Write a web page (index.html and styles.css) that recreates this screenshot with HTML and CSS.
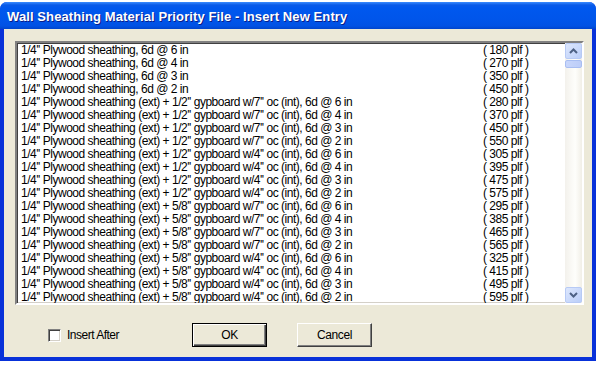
FILE: index.html
```html
<!DOCTYPE html>
<html>
<head>
<meta charset="utf-8">
<link rel="stylesheet" href="styles.css">
</head>
<body>
<div class="window">
  <div class="titlebar"><span class="title">Wall Sheathing Material Priority File - Insert New Entry</span></div>
  <div class="client">
    <div class="listbox">
      <div class="rows">
        <div class="row"><span>1/4'' Plywood sheathing, 6d @ 6 in</span><span>( 180 plf )</span></div>
        <div class="row"><span>1/4'' Plywood sheathing, 6d @ 4 in</span><span>( 270 plf )</span></div>
        <div class="row"><span>1/4'' Plywood sheathing, 6d @ 3 in</span><span>( 350 plf )</span></div>
        <div class="row"><span>1/4'' Plywood sheathing, 6d @ 2 in</span><span>( 450 plf )</span></div>
        <div class="row"><span>1/4'' Plywood sheathing (ext) + 1/2'' gypboard w/7'' oc (int), 6d @ 6 in</span><span>( 280 plf )</span></div>
        <div class="row"><span>1/4'' Plywood sheathing (ext) + 1/2'' gypboard w/7'' oc (int), 6d @ 4 in</span><span>( 370 plf )</span></div>
        <div class="row"><span>1/4'' Plywood sheathing (ext) + 1/2'' gypboard w/7'' oc (int), 6d @ 3 in</span><span>( 450 plf )</span></div>
        <div class="row"><span>1/4'' Plywood sheathing (ext) + 1/2'' gypboard w/7'' oc (int), 6d @ 2 in</span><span>( 550 plf )</span></div>
        <div class="row"><span>1/4'' Plywood sheathing (ext) + 1/2'' gypboard w/4'' oc (int), 6d @ 6 in</span><span>( 305 plf )</span></div>
        <div class="row"><span>1/4'' Plywood sheathing (ext) + 1/2'' gypboard w/4'' oc (int), 6d @ 4 in</span><span>( 395 plf )</span></div>
        <div class="row"><span>1/4'' Plywood sheathing (ext) + 1/2'' gypboard w/4'' oc (int), 6d @ 3 in</span><span>( 475 plf )</span></div>
        <div class="row"><span>1/4'' Plywood sheathing (ext) + 1/2'' gypboard w/4'' oc (int), 6d @ 2 in</span><span>( 575 plf )</span></div>
        <div class="row"><span>1/4'' Plywood sheathing (ext) + 5/8'' gypboard w/7'' oc (int), 6d @ 6 in</span><span>( 295 plf )</span></div>
        <div class="row"><span>1/4'' Plywood sheathing (ext) + 5/8'' gypboard w/7'' oc (int), 6d @ 4 in</span><span>( 385 plf )</span></div>
        <div class="row"><span>1/4'' Plywood sheathing (ext) + 5/8'' gypboard w/7'' oc (int), 6d @ 3 in</span><span>( 465 plf )</span></div>
        <div class="row"><span>1/4'' Plywood sheathing (ext) + 5/8'' gypboard w/7'' oc (int), 6d @ 2 in</span><span>( 565 plf )</span></div>
        <div class="row"><span>1/4'' Plywood sheathing (ext) + 5/8'' gypboard w/4'' oc (int), 6d @ 6 in</span><span>( 325 plf )</span></div>
        <div class="row"><span>1/4'' Plywood sheathing (ext) + 5/8'' gypboard w/4'' oc (int), 6d @ 4 in</span><span>( 415 plf )</span></div>
        <div class="row"><span>1/4'' Plywood sheathing (ext) + 5/8'' gypboard w/4'' oc (int), 6d @ 3 in</span><span>( 495 plf )</span></div>
        <div class="row"><span>1/4'' Plywood sheathing (ext) + 5/8'' gypboard w/4'' oc (int), 6d @ 2 in</span><span>( 595 plf )</span></div>
      </div>
      <div class="scrollbar">
        <div class="sbtn"><svg width="9" height="6" viewBox="0 0 9 6"><path d="M1 5 L4.5 1.5 L8 5" fill="none" stroke="#4D6185" stroke-width="2"/></svg></div>
        <div class="thumb"></div>
        <div class="track"></div>
        <div class="sbtn"><svg width="9" height="6" viewBox="0 0 9 6"><path d="M1 1 L4.5 4.5 L8 1" fill="none" stroke="#4D6185" stroke-width="2"/></svg></div>
      </div>
    </div>
    <div class="footer">
      <div class="opt"><span class="check"></span><span class="optlabel">Insert After</span></div>
      <div class="btn default">OK</div>
      <div class="btn cancel">Cancel</div>
    </div>
  </div>
</div>
</body>
</html>
```
FILE: styles.css
```css
html, body {
  margin: 0;
  padding: 0;
  background: #ffffff;
}
body {
  padding-top: 2px;
  font-family: "Liberation Sans", Arial, sans-serif;
}
.window {
  width: 596px;
  height: 359px;
  box-sizing: border-box;
  display: flex;
  flex-direction: column;
  background: #0831D9;
  border-radius: 7px 7px 0 0;
  overflow: hidden;
}
.titlebar {
  height: 27px;
  flex: none;
  background: linear-gradient(#3A8CFF 0px, #0A5AE8 3px, #0058EE 6px, #0055EA 18px, #0152E4 24px, #0044CC 27px);
  display: flex;
  align-items: center;
  padding-left: 7px;
}
.title {
  color: #ffffff;
  font-family: "Liberation Sans", Arial, sans-serif;
  font-weight: bold;
  font-size: 13px;
  letter-spacing: 0.1px;
  text-shadow: 1px 1px 0 #0A1E8A;
  padding-top: 2px;
}
.client {
  flex: 1;
  margin: 0 4px 4px 4px;
  background: #ECE9D8;
  padding: 12px 0 0 11px;
  box-sizing: border-box;
}
.listbox {
  width: 569px;
  height: 264px;
  box-sizing: border-box;
  border-style: solid;
  border-width: 2px;
  border-color: #808080 #FFFFFF #FFFFFF #808080;
  box-shadow: inset 1px 1px 0 #404040, inset -1px -1px 0 #D4D0C8;
  background: #ffffff;
  display: flex;
  overflow: hidden;
}
.rows {
  flex: 1;
  padding-left: 4px;
  overflow: hidden;
}
.row {
  height: 13px;
  line-height: 14px;
  font-size: 12px;
  color: #000;
  display: grid;
  grid-template-columns: 462px auto;
  white-space: nowrap;
  letter-spacing: -0.48px;
}
.scrollbar {
  width: 17px;
  flex: none;
  display: flex;
  flex-direction: column;
  background: linear-gradient(90deg, #F3F1EC, #FEFEFB 60%, #F1EFE7);
}
.sbtn {
  height: 16px;
  box-sizing: border-box;
  border: 1px solid #B7CAF5;
  border-radius: 2px;
  background: linear-gradient(135deg, #DDE7FD, #BACEF9);
  display: flex;
  align-items: center;
  justify-content: center;
  flex: none;
}
.thumb {
  height: 8px;
  margin-top: 1px;
  box-sizing: border-box;
  border: 1px solid #A8BEF2;
  border-radius: 2px;
  background: linear-gradient(90deg, #C8D6FB, #BCCDF8);
  flex: none;
}
.track {
  flex: 1;
}
.footer {
  display: flex;
  align-items: center;
  padding: 18px 0 0 33px;
}
.opt {
  width: 144px;
  display: flex;
  align-items: center;
}
.check {
  width: 13px;
  height: 13px;
  box-sizing: border-box;
  background: #fff;
  border-style: solid;
  border-width: 1px;
  border-color: #808080 #fff #fff #808080;
  box-shadow: inset 1px 1px 0 #404040, inset -1px -1px 0 #D4D0C8;
}
.optlabel {
  margin-left: 6px;
  font-size: 12px;
  letter-spacing: -0.5px;
}
.btn {
  width: 75px;
  height: 24px;
  box-sizing: border-box;
  display: flex;
  align-items: center;
  justify-content: center;
  font-size: 12px;
  letter-spacing: -0.4px;
  color: #000;
  background: #ECE9D8;
}
.default {
  border: 1px solid #000;
  box-shadow: inset 1px 1px 0 #fff, inset -1px -1px 0 #404040, inset -2px -2px 0 #808080;
}
.cancel {
  margin-left: 30px;
  border-style: solid;
  border-width: 1px;
  border-color: #fff #404040 #404040 #fff;
  box-shadow: inset -1px -1px 0 #808080;
}
```
